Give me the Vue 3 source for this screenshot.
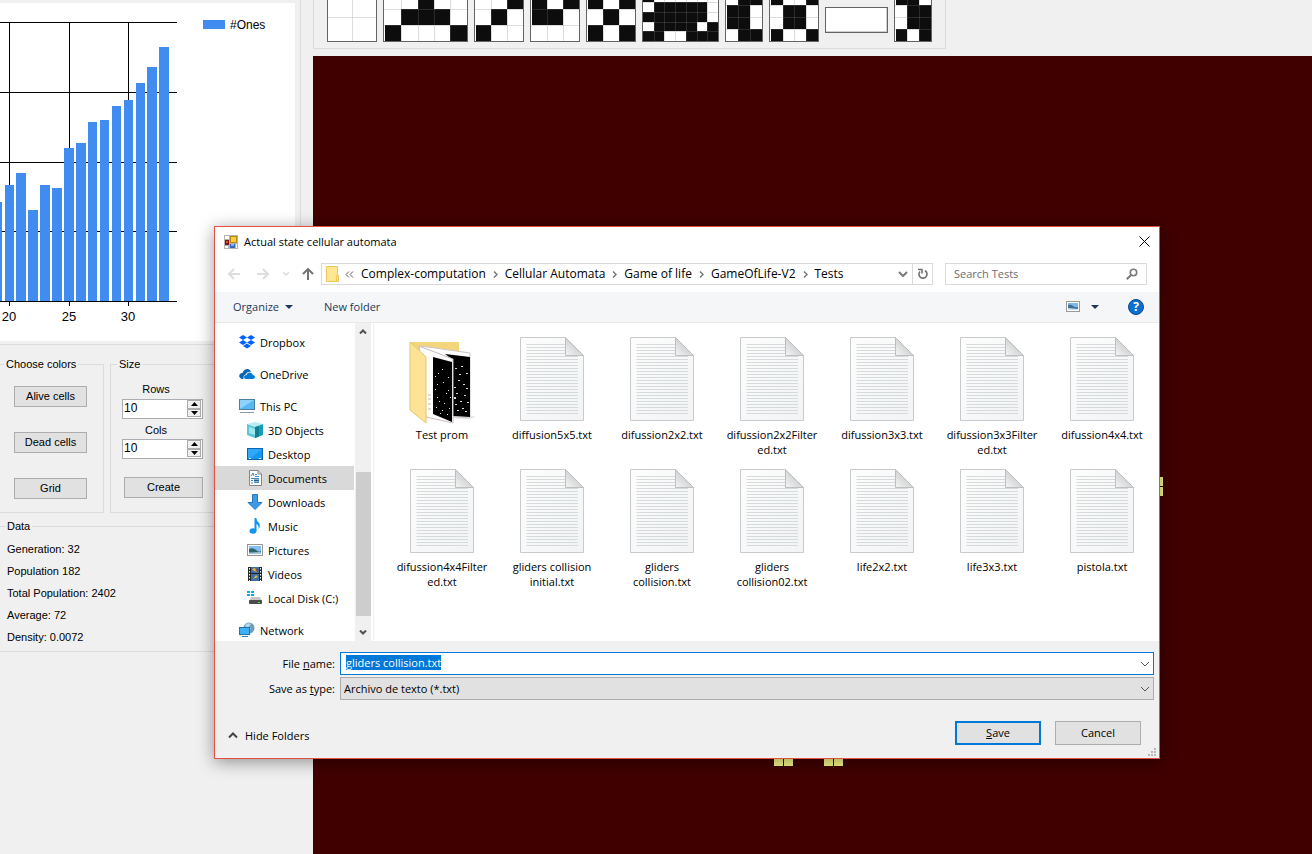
<script setup>
import { nextTick, onMounted, ref } from 'vue'

const bars = [
  [-8, 10, 202], [5, 9, 185], [16, 10, 173], [28, 10, 210], [40, 10, 185], [52, 10, 188],
  [64, 10, 148], [76, 10, 143], [88, 9, 122], [100, 9, 120], [112, 9, 106], [124, 9, 100],
  [136, 9, 83], [147, 10, 67], [159, 10, 47],
]
const ticks = [[9, '20'], [69, '25'], [128, '30']]

const tiles = [
  { w: 50, xs: [1, 25, 49], ys: [-8, 17, 41], rows: ['..', '..'] },
  { w: 85, xs: [2, 18, 35, 51, 67, 84], ys: [-6, 9, 25, 41], rows: ['..#..', '.###.', '#...#'] },
  { w: 50, xs: [2, 17, 33, 49], ys: [-6, 9, 25, 41], rows: ['..#', '.#.', '#..'] },
  { w: 50, xs: [2, 17, 33, 49], ys: [-6, 9, 25, 41], rows: ['#.#', '##.', '...'] },
  { w: 50, xs: [2, 17, 33, 49], ys: [-6, 9, 25, 41], rows: ['#.#', '.#.', '#.#'] },
  { w: 77, xs: [1, 12, 22, 33, 44, 55, 65, 76], ys: [-7, 2, 12, 22, 31, 41], rows: ['#......', '.#####.', '######.', '.####.#', '##..###'] },
  { w: 38, xs: [2, 13, 25, 37], ys: [-7, 5, 17, 29, 41], rows: ['.##', '##.', '##.', '.##'] },
  { w: 50, xs: [2, 14, 25, 37, 49], ys: [-7, 5, 17, 29, 41], rows: ['#..#', '.##.', '.##.', '#..#'] },
  { w: 63, blank: true, xs: [], ys: [], rows: [] },
  { w: 38, xs: [2, 13, 25, 37], ys: [-7, 5, 17, 29, 41], rows: ['##.', '.##', '.##', '#.#'] },
].map((t) => ({
  ...t,
  cells: t.rows.flatMap((r, j) => [...r].flatMap((c, i) => c === '#'
    ? [{ x: t.xs[i], y: t.ys[j], w: t.xs[i + 1] - t.xs[i], h: t.ys[j + 1] - t.ys[j] }]
    : [])),
}))

const colorButtons = ['Alive cells', 'Dead cells', 'Grid']
const rows = ref('10')
const cols = ref('10')
const stats = ['Generation: 32', 'Population 182', 'Total Population: 2402', 'Average: 72', 'Density: 0.0072']

const crumbs = ['Complex-computation', 'Cellular Automata', 'Game of life', 'GameOfLife-V2', 'Tests']
const places = [
  { icon: 'dropbox', name: 'Dropbox', top: true },
  { icon: 'onedrive', name: 'OneDrive', top: true },
  { icon: 'pc', name: 'This PC', top: true },
  { icon: 'cube', name: '3D Objects' },
  { icon: 'desktop', name: 'Desktop' },
  { icon: 'doc', name: 'Documents', on: true },
  { icon: 'down', name: 'Downloads' },
  { icon: 'music', name: 'Music' },
  { icon: 'pic', name: 'Pictures' },
  { icon: 'video', name: 'Videos' },
  { icon: 'disk', name: 'Local Disk (C:)' },
  { icon: 'net', name: 'Network', top: true },
]
const files = [
  'Test prom', 'diffusion5x5.txt', 'difussion2x2.txt', 'difussion2x2Filter\ned.txt', 'difussion3x3.txt',
  'difussion3x3Filter\ned.txt', 'difussion4x4.txt', 'difussion4x4Filter\ned.txt', 'gliders collision\ninitial.txt',
  'gliders\ncollision.txt', 'gliders\ncollision02.txt', 'life2x2.txt', 'life3x3.txt', 'pistola.txt',
]
const specksA = [[27, 39], [30, 36], [35, 45], [27, 52], [38, 56], [42, 60], [31, 64], [28, 70], [34, 73], [40, 40], [29, 60], [36, 66], [29, 47], [41, 71], [32, 76], [39, 77], [34, 32], [40, 53]]
const specksB = [[47, 31], [53, 29], [58, 36], [50, 43], [55, 47], [48, 56], [56, 58], [52, 64], [59, 65], [47, 67], [54, 71], [49, 73], [57, 74], [46, 50], [46, 61], [58, 51], [51, 37], [46, 60]]

const search = ref('')
const fileName = ref('gliders collision.txt')
const nameBox = ref(null)
onMounted(async () => {
  await nextTick()
  nameBox.value.focus({ preventScroll: true })
  nameBox.value.select()
})
</script>

<template>
  <div class="app">
    <aside class="left">
      <section class="chart-box">
        <svg class="chart" width="295" height="338" viewBox="0 3 295 338" shape-rendering="crispEdges">
          <g fill="#000">
            <rect v-for="y in [22, 92, 162, 231]" :key="y" x="0" :y="y" width="177" height="1" />
            <rect v-for="t in ticks" :key="t[0]" :x="t[0]" y="22" width="1" height="284" />
          </g>
          <rect v-for="b in bars" :key="b[0]" :x="b[0]" :y="b[2]" :width="b[1]" :height="301 - b[2]" fill="#418cf0" />
          <rect x="0" y="301" width="177" height="1" />
          <text v-for="t in ticks" :key="t[1]" :x="t[0]" y="321" text-anchor="middle" class="tick">{{ t[1] }}</text>
          <rect x="203" y="20" width="22" height="9" fill="#418cf0" />
          <text x="230" y="29" class="legend-text">#Ones</text>
        </svg>
      </section>

      <div class="groups">
        <fieldset class="group colors">
          <legend>Choose colors</legend>
          <button v-for="b in colorButtons" :key="b" type="button" class="wbtn">{{ b }}</button>
        </fieldset>
        <fieldset class="group size">
          <legend>Size</legend>
          <label for="rows">Rows</label>
          <div class="spin">
            <input id="rows" v-model="rows" type="text">
            <span class="arrows">
              <button type="button" aria-label="More rows"><svg width="7" height="4"><path d="M0 4L3.5 0L7 4Z" /></svg></button>
              <button type="button" aria-label="Fewer rows"><svg width="7" height="4"><path d="M0 0L3.5 4L7 0Z" /></svg></button>
            </span>
          </div>
          <label for="cols">Cols</label>
          <div class="spin">
            <input id="cols" v-model="cols" type="text">
            <span class="arrows">
              <button type="button" aria-label="More columns"><svg width="7" height="4"><path d="M0 4L3.5 0L7 4Z" /></svg></button>
              <button type="button" aria-label="Fewer columns"><svg width="7" height="4"><path d="M0 0L3.5 4L7 0Z" /></svg></button>
            </span>
          </div>
          <button type="button" class="wbtn create">Create</button>
        </fieldset>
      </div>
      <fieldset class="group data">
        <legend>Data</legend>
        <p v-for="s in stats" :key="s">{{ s }}</p>
      </fieldset>
    </aside>

    <main class="right">
      <div class="patterns">
        <svg v-for="(t, i) in tiles" :key="i" :width="t.w" height="42" :viewBox="`0 0 ${t.w} 42`" shape-rendering="crispEdges">
          <template v-if="t.blank">
            <rect x="0" y="7" :width="t.w" height="26" fill="#646464" />
            <rect x="1" y="8" :width="t.w - 2" height="24" fill="#d0d0d0" />
            <rect x="1" y="8" :width="t.w - 3" height="23" fill="#fff" />
          </template>
          <template v-else>
            <rect x="0" y="-1" :width="t.w" height="43" fill="#646464" />
            <rect x="1" y="-1" :width="t.w - 2" height="42" fill="#fff" />
            <g fill="#808080" fill-opacity="0.3">
              <rect v-for="x in t.xs.slice(1, -1)" :key="'x' + x" :x="x" y="0" width="1" height="41" />
              <rect v-for="y in t.ys.slice(1, -1)" :key="'y' + y" x="1" :y="y" :width="t.w - 2" height="1" />
            </g>
            <rect v-for="(c, k) in t.cells" :key="k" :x="c.x" :y="c.y" :width="c.w" :height="c.h" fill="#0d0d0d" />
            <g fill="#fff" fill-opacity="0.12">
              <rect v-for="x in t.xs.slice(1, -1)" :key="'a' + x" :x="x" y="0" width="1" height="41" />
              <rect v-for="y in t.ys.slice(1, -1)" :key="'b' + y" x="1" :y="y" :width="t.w - 2" height="1" />
            </g>
          </template>
        </svg>
      </div>
      <div class="canvas">
        <svg class="cells" width="860" height="720" viewBox="313 56 860 720" shape-rendering="crispEdges" fill="#fafa8c">
          <rect x="1154" y="477" width="9" height="9" /><rect x="1154" y="487" width="9" height="9" />
          <rect x="774" y="757" width="9" height="9" /><rect x="784" y="757" width="9" height="9" />
          <rect x="824" y="757" width="9" height="9" /><rect x="834" y="757" width="9" height="9" />
        </svg>
      </div>
    </main>

    <section class="dialog" role="dialog" aria-labelledby="dlg-title">
      <header class="title">
        <svg width="14" height="14" viewBox="0 0 14 14" shape-rendering="crispEdges">
          <rect width="14" height="14" fill="#b4b4b4" /><rect x="1" y="1" width="4" height="3" fill="#fff" /><rect x="1" y="11" width="3" height="2" fill="#fff" />
          <rect x="12" y="9" width="1" height="4" fill="#fff" />
          <rect x="6" y="1" width="7" height="7" fill="#b8860b" /><rect x="7" y="2" width="5" height="5" fill="#ffcf3f" />
          <rect x="1" y="5" width="4" height="5" fill="#8c1010" /><rect x="2" y="6" width="2" height="2" fill="#e05038" />
          <rect x="6" y="9" width="5" height="4" fill="#3568c0" /><rect x="7" y="9" width="3" height="2" fill="#7fb4f4" />
        </svg>
        <h1 id="dlg-title">Actual state cellular automata</h1>
        <button type="button" class="bare" aria-label="Close"><svg width="11" height="11" viewBox="0 0 11 11"><path d="M.5 .5L10.500 10.500M10.500 .5L.5 10.500" stroke="#000" fill="none" /></svg></button>
      </header>

      <nav class="nav">
        <div class="history">
          <button type="button" class="bare" aria-label="Back"><svg width="12" height="12" viewBox="0 0 12 12"><path d="M12 6H1M6 1L1 6L6 11" stroke="#dedede" stroke-width="2" fill="none" /></svg></button>
          <button type="button" class="bare" aria-label="Forward"><svg width="12" height="12" viewBox="0 0 12 12"><path d="M0 6H11M6 1L11 6L6 11" stroke="#dedede" stroke-width="2" fill="none" /></svg></button>
          <button type="button" class="bare" aria-label="Recent"><svg width="6" height="12" viewBox="0 0 6 12"><path d="M0 4L3 7L6 4" stroke="#dadada" stroke-width="1.500" fill="none" /></svg></button>
          <button type="button" class="bare" aria-label="Up"><svg width="12" height="12" viewBox="0 0 12 12"><path d="M6 12V1M1 6L6 1L11 6" stroke="#737373" stroke-width="2" fill="none" /></svg></button>
        </div>
        <div class="address">
          <svg class="fold" width="13" height="16" viewBox="0 0 13 16"><path d="M.5 .5H11.500V9.500H12.500V15.500H.5Z" fill="#ffe793" stroke="#efc757" /><path d="M10.500 15V9.500H12" fill="none" stroke="#efc757" /></svg>
          <svg class="dbl" width="9" height="7" viewBox="0 0 9 7"><path d="M4 .5L1 3.500L4 6.500M8 .5L5 3.500L8 6.500" fill="none" stroke="#555" /></svg>
          <template v-for="(c, i) in crumbs" :key="c">
            <svg v-if="i" class="sep" width="5" height="7" viewBox="0 0 5 7"><path d="M1 .5L4 3.500L1 6.500" fill="none" stroke="#777" stroke-width="1.500" /></svg>
            <a href="#">{{ c }}</a>
          </template>
          <button type="button" class="bare drop" aria-label="Previous locations"><svg width="10" height="6" viewBox="0 0 10 6"><path d="M1 1L5 5L9 1" fill="none" stroke="#7a7a7a" stroke-width="2" /></svg></button>
          <button type="button" class="bare refresh" aria-label="Refresh"><svg width="12" height="12" viewBox="0 0 12 12"><path d="M3 3.500A4 4 0 1 0 8 2.700" fill="none" stroke="#6e6e6e" stroke-width="1.600" /><path d="M1 1.500H5V5.500" fill="none" stroke="#6e6e6e" stroke-width="1.500" /></svg></button>
        </div>
        <div class="search">
          <input v-model="search" type="text" placeholder="Search Tests" aria-label="Search Tests">
          <svg width="12" height="12" viewBox="0 0 12 12"><circle cx="7.500" cy="4.500" r="3.200" fill="none" stroke="#7a7a7a" stroke-width="1.600" /><path d="M5.300 6.800L.8 11.300" stroke="#7a7a7a" stroke-width="2" /></svg>
        </div>
      </nav>

      <div class="toolbar">
        <button type="button" class="bare">Organize<svg width="8" height="4" viewBox="0 0 8 4"><path d="M0 0H8L4 4Z" fill="#1e395b" /></svg></button>
        <button type="button" class="bare new">New folder</button>
        <button type="button" class="bare view" aria-label="Change view">
          <svg width="14" height="11" viewBox="0 0 14 11"><rect x=".5" y=".5" width="13" height="10" fill="#fff" stroke="#9a9a9a" /><rect x="2" y="2" width="10" height="7" fill="#7db7ee" /><path d="M2 4Q5 3 7 5T12 6V9H2Z" fill="#3e6f8e" /><path d="M2 7L12 8V9H2Z" fill="#c8e2f4" /></svg>
          <svg width="8" height="4" viewBox="0 0 8 4"><path d="M0 0H8L4 4Z" fill="#1e395b" /></svg>
        </button>
        <button type="button" class="bare help" aria-label="Help">?</button>
      </div>

      <div class="body">
        <div class="tree">
          <ul>
            <li v-for="p in places" :key="p.name" :class="{ top: p.top, on: p.on }">
              <svg width="16" height="16" viewBox="0 0 16 16">
                <g v-if="p.icon === 'dropbox'" fill="#0061fe"><path d="M4 1L8 3.500L4 6L0 3.500ZM12 1L16 3.500L12 6L8 3.500ZM4 6L8 8.500L4 11L0 8.500ZM12 6L16 8.500L12 11L8 8.500ZM4 12L8 9.500L12 12L8 14.500Z" /></g>
                <g v-else-if="p.icon === 'onedrive'"><path d="M3 13A3 3 0 0 1 1 8Q2 7 3.500 7Q5 3 8.500 3Q11 3 12 6Q8 5 6.500 8.500Q4 9 4.500 13Z" fill="#0a64b4" /><path d="M7 13Q5 13 5 11T7.500 9Q8 6.500 10.500 6.500T14 9Q16 9.300 16 11T14 13Z" fill="#0078d7" /></g>
                <g v-else-if="p.icon === 'pc'"><rect x=".5" y="1.500" width="15" height="10" fill="#58b8f4" stroke="#4c7f9d" /><path d="M1 11V2H15Z" fill="#8dd2fa" /><path d="M1 14.500H15" stroke="#8a9aa8" /></g>
                <g v-else-if="p.icon === 'cube'"><path d="M0 2L8 0L16 2L8 5Z" fill="#b9ecf2" /><path d="M0 2L8 5V16L0 13Z" fill="#5cc7d6" /><path d="M2 5L8 7V13L2 11Z" fill="#9fe6ee" /><path d="M8 5L16 2V13L8 16Z" fill="#189db4" /><path d="M8 5L12 4V14.500L8 16Z" fill="#107f94" /></g>
                <g v-else-if="p.icon === 'desktop'"><rect x=".5" y="2.500" width="15" height="11" fill="#1598f0" stroke="#0b65b5" /><path d="M1 3H15L4 12H1Z" fill="#2fa8f8" /><path d="M2 12.500H4M12 12.500H14" stroke="#fff" /></g>
                <g v-else-if="p.icon === 'doc'"><path d="M2.500 .5H11L14.500 4V15.500H2.500Z" fill="#fff" stroke="#858585" /><path d="M11 .5V4H14" fill="none" stroke="#858585" /><path d="M4 6L6 3L7 6M8 4.500H10M8 6.500H12M4 8.500H12M4 10.500H6M7 12.500H12M4 13H6" stroke="#3a8dc4" fill="none" /><path d="M7 10.500H12" stroke="#25608f" stroke-width="2" /></g>
                <path v-else-if="p.icon === 'down'" d="M5.500 .5H10.500V8.500H15L8 15.500L1 8.500H5.500Z" fill="#3c9be8" stroke="#2878bd" />
                <g v-else-if="p.icon === 'music'"><ellipse cx="6" cy="13" rx="3.500" ry="2.700" fill="#1296ec" /><path d="M7.500 13V0H9.300Q9.500 3 12 5Q14 8 11.500 11Q12 7 9.500 6V13Z" fill="#1296ec" /></g>
                <g v-else-if="p.icon === 'pic'"><rect x=".5" y="2.500" width="15" height="11" fill="#fff" stroke="#969696" /><rect x="2" y="4" width="12" height="8" fill="#83c0ef" /><path d="M2 7Q6 5 9 8T14 9V12H2Z" fill="#2c6571" /><path d="M2 10.500L14 10V12H2Z" fill="#9cc4dc" /></g>
                <g v-else-if="p.icon === 'video'"><rect x="1" y="1" width="14" height="14" fill="#26282c" /><rect x="4" y="1" width="8" height="14" fill="#3c6fa8" /><path d="M5 3L8 2L10 6L7 5ZM6 13L9 9L11 11Z" fill="#e8b53a" /><path d="M8 4L11 3V6Z" fill="#a04020" /><path d="M4 7.500H12" stroke="#222" /><path d="M2.500 2V15M13.500 2V15" stroke="#fff" stroke-dasharray="1.500 1.500" /></g>
                <g v-else-if="p.icon === 'disk'"><path d="M0 1H3V3H0ZM4 1H7V3H4ZM0 4H3V6H0ZM4 4H7V6H4Z" fill="#00b4e8" /><path d="M4 7H13L15 11H2Z" fill="#c6c6c6" /><rect x="2" y="10" width="13" height="4" rx="1" fill="#4b4b4b" /><rect x="11" y="12" width="2" height="1" fill="#4be04b" /></g>
                <g v-else><circle cx="10" cy="6" r="5.500" fill="#6d9dbd" /><path d="M6 3Q9 0 12 2L10 5L12 7L9 9Z" fill="#b5d6e8" /><rect x=".5" y="5.500" width="10" height="7" fill="#3eb0f6" stroke="#2273ac" /><path d="M3 14.500H9" stroke="#2b82bd" /></g>
              </svg>
              <a href="#">{{ p.name }}</a>
            </li>
          </ul>
          <div class="scroll">
            <svg width="8" height="5" viewBox="0 0 8 5"><path d="M1 4.500L4 1.500L7 4.500" fill="none" stroke="#505050" stroke-width="2" /></svg>
            <i />
            <svg width="8" height="5" viewBox="0 0 8 5"><path d="M1 .5L4 3.500L7 .5" fill="none" stroke="#505050" stroke-width="2" /></svg>
          </div>
        </div>
        <div class="files">
          <figure v-for="(f, i) in files" :key="f">
            <svg v-if="i" width="64" height="84" viewBox="0 0 64 84">
              <defs>
                <linearGradient :id="`page${i}`" x1="0" y1="0" x2="1" y2="1"><stop offset="0" stop-color="#fdfdfd" /><stop offset="1" stop-color="#f1f3f5" /></linearGradient>
                <linearGradient :id="`curl${i}`" x1="0" y1="1" x2="1" y2="0"><stop offset="0" stop-color="#f6f6f6" /><stop offset=".5" stop-color="#d4d5d6" /></linearGradient>
              </defs>
              <path d="M.5 .5H45.500L63.500 18.500V83.500H.5Z" :fill="`url(#page${i})`" stroke="#c8cacb" />
              <path d="M6.500 7.500H45M6.500 10.500H45M6.500 13.500H45M6.500 16.500H45M6.500 19.500H58M6.500 22.500H58M6.500 25.500H58M6.500 28.500H58M6.500 31.500H58M6.500 34.500H58M6.500 37.500H58M6.500 40.500H58M6.500 43.500H58M6.500 46.500H58M6.500 49.500H58M6.500 52.500H58M6.500 55.500H58M6.500 58.500H58M6.500 61.500H58M6.500 64.500H58M6.500 67.500H58M6.500 70.500H58M6.500 73.500H58M6.500 76.500H58" stroke="#d7dadb" />
              <path d="M45.500 .5V18.500H63.500Z" :fill="`url(#curl${i})`" stroke="#bcbebf" />
            </svg>
            <svg v-else width="68" height="88" viewBox="0 0 68 88">
              <ellipse cx="56" cy="80" rx="11" ry="2" fill="#e8e8e8" />
              <path d="M2 5H51V74H2Z" fill="#f3d57c" />
              <path d="M13 9L62 16V81L36 79Z" fill="#fff" stroke="#cfc6c6" />
              <path d="M37 17L62 20V80L45 79V23Z" fill="#000" />
              <path d="M11 9L45 22V86L18 80Z" fill="#fdfdfd" stroke="#c9bcbc" />
              <path d="M25 20L44 25V85L25 77Z" fill="#000" />
              <g fill="#ddd"><rect v-for="(s, k) in specksA" :key="k" :x="s[0]" :y="s[1]" width="1" height="1" /><rect v-for="(s, k) in specksB" :key="'b' + k" :x="s[0]" :y="s[1]" width="2" height="1" /></g>
              <path d="M2 5L18 20V86L2 73Z" fill="#fde396" stroke="#e8c76c" />
              <path d="M20 58H23M20 62H23M20 67H23M20 72H23" stroke="#bbb" />
            </svg>
            <figcaption>{{ f }}</figcaption>
          </figure>
        </div>
      </div>

      <footer class="foot">
        <div class="field">
          <label for="fname">File <u>n</u>ame:</label>
          <div class="combo">
            <input id="fname" ref="nameBox" v-model="fileName" type="text">
            <svg width="10" height="6" viewBox="0 0 10 6"><path d="M1 1L5 5L9 1" fill="none" stroke="#555" /></svg>
          </div>
        </div>
        <div class="field">
          <label for="ftype">Save as <u>t</u>ype:</label>
          <div class="combo grey">
            <select id="ftype"><option>Archivo de texto (*.txt)</option></select>
            <svg width="10" height="6" viewBox="0 0 10 6"><path d="M1 1L5 5L9 1" fill="none" stroke="#555" /></svg>
          </div>
        </div>
        <div class="actions">
          <button type="button" class="bare hide"><svg width="10" height="7" viewBox="0 0 10 7"><path d="M1 5.500L5 1.500L9 5.500" fill="none" stroke="#444" stroke-width="2" /></svg>Hide Folders</button>
          <button type="button" class="btn primary"><span><u>S</u>ave</span></button>
          <button type="button" class="btn">Cancel</button>
        </div>
        <svg class="grip" width="8" height="8" viewBox="0 0 8 8" fill="#b9b9b9"><path d="M6 0H8V2H6ZM3 3H5V5H3ZM6 3H8V5H6ZM0 6H2V8H0ZM3 6H5V8H3ZM6 6H8V8H6Z" /></svg>
      </footer>
    </section>
  </div>
</template>

<style>
body { background: #f0f0f0; }
</style>

<style scoped>
* { box-sizing: border-box; }
.app { position: relative; display: flex; min-height: 100vh; overflow: hidden; background: #f0f0f0; color: #000; font: 11px/15px "Liberation Sans", Arial, sans-serif; }
button, input, select { font: inherit; color: inherit; }
svg { display: block; flex: none; }
a { color: inherit; text-decoration: none; }
.bare { display: flex; align-items: center; padding: 0; border: 0; background: none; }

.left { flex: none; width: 313px; }
.chart-box { width: 301px; height: 345px; padding-top: 3px; border: solid #dcdcdc; border-width: 0 1px 1px 0; }
.chart { background: #fff; }
.tick { font-size: 13px; }
.legend-text { font-size: 12px; }
.groups { display: flex; gap: 6px; padding-top: 12px; }
.group { margin: 0; padding: 0; border: 1px solid #dcdcdc; min-width: 0; }
.group legend { height: 15px; margin-left: 6px; padding: 0 2px; }
.colors { display: flex; flex-direction: column; width: 104px; height: 156px; border-left: 0; }
.colors legend { margin-left: 4px; }
.wbtn { display: block; flex: none; width: 73px; height: 21px; margin: 14px 0 25px 14px; padding: 0; border: 1px solid #adadad; background: #e1e1e1; }
.wbtn + .wbtn { margin-top: 0; }
.size { width: 191px; height: 156px; }
.size label { display: block; width: 70px; margin: 10px 0 2px 10px; height: 15px; text-align: center; }
.size .spin + label { margin-top: 4px; margin-bottom: 1px; }
.spin { display: flex; width: 81px; height: 20px; margin-left: 11px; border: 1px solid #abadb3; background: #fff; }
.spin input { flex: 1; min-width: 0; padding: 0 1px 2px; border: 0; outline: 0; background: none; font-size: 12px; }
.arrows { display: flex; flex-direction: column; width: 15px; padding: 0 1px 1px 0; }
.arrows button { display: flex; flex: 1; align-items: center; justify-content: center; padding: 0; border: 1px solid #adadad; background: #f0f0f0; }
.create { width: 79px; margin: 18px 0 0 13px; }
.data { width: 301px; height: 133px; margin-top: 6px; border-left: 0; }
.data legend { margin-left: 5px; }
.data p { margin: 0; padding: 0 7px; line-height: 22px; }
.data p:first-of-type { padding-top: 4px; }

.right { display: flex; flex: 1; flex-direction: column; min-width: 0; }
.patterns { display: flex; gap: 6px; width: 633px; height: 49px; padding-left: 13px; border: solid #dcdcdc; border-width: 0 1px 1px; }
.canvas { flex: 1; margin-top: 7px; background: #400000; overflow: hidden; }

.dialog { position: absolute; top: 226px; left: 214px; right: 152px; display: flex; flex-direction: column; border: 1px solid #e2503f; background: #fff; box-shadow: 0 3px 16px rgba(0, 0, 0, .4); font-family: "Open Sans", "Noto Sans", sans-serif; }
.title { display: flex; align-items: center; height: 29px; padding: 0 9px; }
.title h1 { flex: 1; margin: 0 0 0 6px; font-size: 11px; font-weight: 400; }
.nav { display: flex; align-items: center; height: 36px; padding: 0 12px 0 13px; }
.history { display: flex; align-items: center; gap: 17px; width: 93px; flex: none; }
.history .bare:nth-child(3) { margin-left: -3px; }
.history .bare:nth-child(4) { margin-left: -4px; }
.address { display: flex; flex: 1; align-items: center; height: 22px; border: 1px solid #d9d9d9; font-size: 12px; white-space: nowrap; }
.address a { padding-bottom: 2px; }
.fold { margin: 0 6px 0 4px; }
.dbl { margin-right: 7px; }
.sep { margin: 0 7px; }
.drop { margin-left: auto; padding: 0 4px; }
.refresh { justify-content: center; width: 20px; height: 20px; border-left: 1px solid #d9d9d9; }
.search { display: flex; align-items: center; width: 202px; height: 22px; margin-left: 12px; padding: 0 8px; border: 1px solid #d9d9d9; }
.search input { flex: 1; min-width: 0; padding: 0 0 2px; border: 0; outline: 0; background: none; }
.search input::placeholder { color: #6d6d6d; opacity: 1; }
.toolbar { display: flex; align-items: center; height: 31px; padding: 0 15px 1px 18px; border-bottom: 1px solid #e7e9eb; background: #f5f6f7; color: #1e395b; }
.toolbar .bare { gap: 6px; }
.toolbar .new { margin-left: 31px; }
.toolbar .view { gap: 11px; margin-left: auto; }
.toolbar .help { justify-content: center; width: 16px; height: 16px; margin-left: 29px; border: 1px solid #0a4a8c; border-radius: 50%; background: #0c6fd0; color: #fff; font-size: 12px; font-weight: 700; }
.body { display: flex; height: 318px; }
.tree { display: flex; width: 159px; border-right: 1px solid #f2f2f2; flex: none; }
.tree ul { flex: 1; margin: 0; padding: 7px 0 0; list-style: none; }
.tree li { display: flex; align-items: center; gap: 5px; height: 24px; margin-right: 1px; padding-left: 32px; white-space: nowrap; }
.tree li.top { padding-left: 24px; }
.tree li.top + .top, .tree li:last-child { margin-top: 8px; }
.tree li.on { background: #d9d9d9; }
.scroll { display: flex; flex-direction: column; align-items: center; width: 16px; margin-right: 2px; padding: 6px 0; background: #f0f0f0; }
.scroll i { width: 15px; height: 144px; margin: auto 0 14px; background: #cdcdcd; }
.files { display: grid; flex: 1; grid-template-columns: repeat(auto-fill, 110px); grid-auto-rows: 132px; padding: 13px 0 0 13px; }
figure { display: flex; flex-direction: column; align-items: center; justify-content: flex-start; margin: 0; padding-top: 1px; }
figure svg { margin-bottom: 6px; }
figure:first-child svg { margin-bottom: 2px; }
figcaption { text-align: center; white-space: pre; }

.foot { position: relative; padding: 11px 5px 13px 0; background: #f0f0f0; }
.field { display: flex; align-items: center; margin-bottom: 2px; }
.field label { width: 120px; margin-right: 5px; text-align: right; }
.combo { display: flex; flex: 1; align-items: center; height: 23px; padding-right: 3px; border: 1px solid #0078d7; background: #fff; }
.combo.grey { border-color: #adadad; background: #e1e1e1; }
.combo input, .combo select { flex: 1; min-width: 0; height: 17px; padding: 0 0 0 5px; border: 0; outline: 0; background: none; appearance: none; }
.combo input { height: 19px; padding-bottom: 2px; }
.combo select { padding-left: 3px; }
.combo input::selection { background: #0078d7; color: #fff; }
.actions { display: flex; align-items: center; gap: 14px; margin-top: 21px; padding-right: 13px; }
.hide { gap: 7px; margin: 4px auto 0 13px; }
.btn { width: 86px; height: 24px; padding: 0 0 2px; border: 1px solid #adadad; background: #e1e1e1; }
.btn.primary { border: 2px solid #0078d7; }
.grip { position: absolute; right: 3px; bottom: 2px; }
</style>
